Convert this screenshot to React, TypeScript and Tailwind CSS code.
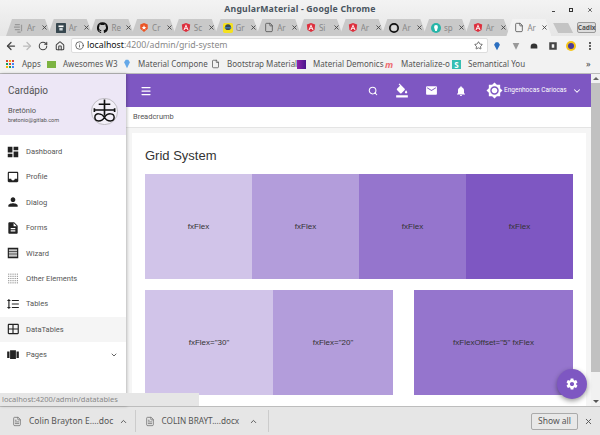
import React from "react";
import { ArrowLeft, ArrowRight, RotateCw, Home, Info, Star, MoreVertical, X, ChevronUp, ChevronDown, Search, Menu, FileText, File } from "lucide-react";

const P = ({ d, className = "w-[16px] h-[16px]", fill = "currentColor" }: { d: string; className?: string; fill?: string }) => (
  <svg viewBox="0 0 24 24" className={className} fill={fill}><path d={d} /></svg>
);

const Angular = () => (
  <svg viewBox="0 0 24 24" className="w-[10px] h-[11px] shrink-0">
    <path d="M12 1 L22 5 L20.500 18 L12 23 L3.500 18 L2 5Z" fill="#dd2f3d" />
    <path d="M12 4 L6 18 H8.500 L9.700 15 H14.300 L15.500 18 H18 Z M12 9 L13.500 13 H10.500Z" fill="#fff" fillRule="evenodd" />
  </svg>
);
const Doc = () => <File className="w-[10px] h-[11px] shrink-0 text-[#555]" strokeWidth={2} />;

const favicons: React.ReactNode[] = [
  <svg viewBox="0 0 12 12" className="w-[10px] h-[10px] shrink-0"><path d="M1 2h6M0 5h7M1 8h6M4 11h4M9 2v8" stroke="#999" strokeWidth="1.500" fill="none" /></svg>,
  <svg viewBox="0 0 12 12" className="w-[10px] h-[10px] shrink-0"><rect width="12" height="12" rx="1" fill="#37474f" /><rect x="3" y="3" width="6" height="2" fill="#fff" /><rect x="4" y="6" width="4" height="3" fill="#cfd8dc" /></svg>,
  <svg viewBox="0 0 24 24" className="w-[11px] h-[11px] shrink-0" fill="#111"><path d="M12 .5a12 12 0 0 0-3.800 23.400c.6.1.8-.3.8-.6v-2c-3.300.7-4-1.600-4-1.600-.6-1.400-1.400-1.800-1.400-1.800-1-.7.1-.7.1-.7 1.200.1 1.800 1.200 1.800 1.200 1 1.800 2.800 1.300 3.500 1 .1-.8.4-1.300.8-1.600-2.700-.3-5.500-1.300-5.500-6 0-1.200.5-2.300 1.300-3.100-.2-.4-.6-1.600 0-3.200 0 0 1-.3 3.400 1.200a11.500 11.500 0 0 1 6 0c2.300-1.500 3.300-1.200 3.300-1.200.7 1.600.2 2.800.1 3.200.8.8 1.300 1.900 1.300 3.100 0 4.600-2.800 5.700-5.500 6 .4.4.8 1.100.8 2.200v3.300c0 .3.2.7.8.6A12 12 0 0 0 12 .5z" /></svg>,
  <svg viewBox="0 0 24 24" className="w-[10px] h-[11px] shrink-0"><path d="M12 1 L21 5 L21 15 L12 23 L3 15 L3 5Z" fill="#eb5424" /><path d="M12 6l1.700 4.500H18l-3.500 2.700 1.300 4.300L12 15l-3.800 2.500 1.300-4.300L6 10.500h4.300z" fill="#fff" /></svg>,
  <Angular />,
  <svg viewBox="0 0 12 12" className="w-[10px] h-[10px] shrink-0"><rect width="12" height="12" rx="2" fill="#f5e11f" /><circle cx="6" cy="5" r="3.500" fill="#37474f" /><rect x="2" y="5" width="8" height="1.500" fill="#3f7fbf" /></svg>,
  <Doc />,
  <Angular />,
  <Angular />,
  <svg viewBox="0 0 12 12" className="w-[10px] h-[10px] shrink-0"><circle cx="6" cy="6" r="5" fill="none" stroke="#111" strokeWidth="2" /><rect x="3.500" y="3.500" width="5" height="5" fill="#ddd" /></svg>,
  <svg viewBox="0 0 12 12" className="w-[10px] h-[10px] shrink-0"><circle cx="6" cy="6" r="6" fill="#26b5a8" /><path d="M6 2.500a2.300 2.300 0 0 1 2.300 2.500L7 9.500H5L3.700 5A2.300 2.300 0 0 1 6 2.500z" fill="#fff" /></svg>,
  <Angular />,
  <Doc />,
];
const tabLabels = ["Ar", "Ar", "Re", "Cr", "Sc", "Gr", "Ar", "Si", "Ar", "Ar", "sp", "Ar", "Ar"];

const Tab = ({ i }: { i: number }) => {
  const active = i === 12;
  return (
    <div className={`relative -mr-[3.300px] w-[45px] h-[17px] flex items-center pl-[8px] gap-[3px] text-[8px] [clip-path:polygon(0_100%,6px_0,39px_0,45px_100%)] ${active ? "bg-[#f2f2f2] z-10" : "bg-[#c9c9c9]"}`}>
      {favicons[i]}
      <span className="text-[#888] w-[10px] overflow-hidden leading-[12px]">{tabLabels[i]}</span>
      <X className="w-[7px] h-[7px] text-[#444] ml-[1px] shrink-0" strokeWidth={3} />
    </div>
  );
};

const ICONS: Record<string, string> = {
  Dashboard: "M3 13h8V3H3v10zm0 8h8v-6H3v6zm10 0h8V11h-8v10zm0-18v6h8V3h-8z",
  Profile: "M19 3H4.990C3.890 3 3 3.900 3 5l.010 14c0 1.100.880 2 1.980 2H19c1.100 0 2-.9 2-2V5c0-1.100-.9-2-2-2zm0 12h-4c0 1.660-1.350 3-3 3s-3-1.340-3-3H4.990V5H19v10z",
  Dialog: "M12 12c2.210 0 4-1.790 4-4s-1.790-4-4-4-4 1.790-4 4 1.790 4 4 4zm0 2c-2.670 0-8 1.340-8 4v2h16v-2c0-2.660-5.330-4-8-4z",
  Forms: "M14 2H6c-1.100 0-1.990.9-1.990 2L4 20c0 1.100.890 2 1.990 2H18c1.100 0 2-.9 2-2V8l-6-6zm2 16H8v-2h8v2zm0-4H8v-2h8v2zm-3-5V3.500L18.500 9H13z",
  Wizard: "M3 3h18v18H3zM5 6v2h14V6zM5 10v1.500h14V10zM5 13v1.500h14V13zM5 16v2h14v-2z",
  Tables: "M6 7h2.500L5 3.500 1.500 7H4v10H1.500L5 20.500 8.500 17H6V7zm4-2v2h12V5H10zm0 14h12v-2H10v2zm0-6h12v-2H10v2z",
  DataTables: "M20 3H5c-1.100 0-2 .9-2 2v14c0 1.100.9 2 2 2h15c1.100 0 2-.9 2-2V5c0-1.100-.9-2-2-2zM11 19H5v-6h6v6zm0-8H5V5h6v6zm9 8h-7v-6h7v6zm0-8h-7V5h7v6z",
  Pages: "M7 19h10V4H7v15zm-5-2h4V6H2v11zm16-11v11h4V6h-4z",
};

const nav = ["Dashboard", "Profile", "Dialog", "Forms", "Wizard", "Other Elements", "Tables", "DataTables", "Pages"];

const DotGrid = () => (
  <svg viewBox="0 0 24 24" className="w-[13px] h-[13px] text-[#888]" fill="currentColor">
    {[3, 7, 11, 15, 19].map((y) => [4, 8, 12, 16, 20].map((x) => <rect key={`${x}-${y}`} x={x} y={y} width="2" height="2" />))}
  </svg>
);

const Bookmark = ({ icon, label, w }: { icon: React.ReactNode; label: string; w: string }) => (
  <div className={`flex items-center shrink-0 ${w}`}>
    <div className="w-[16px] shrink-0">{icon}</div>
    <span className="whitespace-nowrap text-[8px] leading-[12px] text-[#555]">{label}</span>
  </div>
);

const Block = ({ className, label }: { className: string; label: string }) => (
  <div className={`flex items-center justify-center text-[8px] text-[#333] ${className}`}>{label}</div>
);

export default function App() {
  return (
    <div className="relative w-[600px] h-[435px] overflow-hidden bg-white font-['Roboto',sans-serif]">
      {/* Chrome */}
      <div className="h-[74px] bg-gradient-to-b from-[#f3f3f3] to-[#d8d8d8] font-['Noto_Sans','DejaVu_Sans',sans-serif]">
        <div className="relative h-[19px] flex items-center justify-center text-[8.700px] font-bold text-[#4a5560] tracking-[0.200px]">
          AngularMaterial - Google Chrome
          <div className="absolute right-[7px] top-[7px] flex items-center gap-[14px]">
            <div className="w-[3px] h-[1.500px] mt-[3px] bg-[#444]" />
            <div className="w-[4px] h-[4px] border border-[#333]" />
            <X className="w-[6px] h-[6px] text-[#333]" strokeWidth={3} />
          </div>
        </div>
        <div className="h-[17px] flex items-end pl-[6px]">
          {Array.from({ length: 13 }, (_, i) => <Tab key={i} i={i} />)}
          <div className="ml-[5px] mb-[3px] w-[20px] h-[10px] bg-[#c4c4c4] [clip-path:polygon(0_0,75%_0,100%_100%,25%_100%)]" />
          <div className="ml-[4px] mb-[3px] w-[19px] h-[11px] border border-[#999] rounded-[2px] bg-[#ddd] text-[6.500px] font-bold text-[#555] flex items-center justify-center">Cadix</div>
        </div>
        <div className="h-[19px] bg-[#f2f2f2] flex items-center pl-[5px] pr-[3px]">
          <ArrowLeft className="w-[12px] h-[12px] text-[#444]" strokeWidth={2.500} />
          <ArrowRight className="w-[12px] h-[12px] text-[#bbb] ml-[4px]" strokeWidth={2.500} />
          <RotateCw className="w-[10px] h-[10px] text-[#444] ml-[5px]" strokeWidth={2.500} />
          <Home className="w-[10px] h-[10px] text-[#444] ml-[7px]" strokeWidth={2.500} />
          <div className="ml-[6px] w-[417px] h-[15px] bg-white border border-[#ddd] rounded-[2px] flex items-center pl-[3px] pr-[4px] text-[8.750px]">
            <Info className="w-[9px] h-[9px] text-[#444]" strokeWidth={2} />
            <span className="ml-[3px] text-[#111]">localhost</span>
            <span className="text-[#888]">:4200/admin/grid-system</span>
            <Star className="w-[9px] h-[9px] text-[#444] ml-auto" strokeWidth={2} />
          </div>
          <div className="flex items-center gap-[8.600px] ml-[4px]">
            <P d="M12 22 L5 9 L9 3 H15 L19 9Z" className="w-[10px] h-[10px] text-[#2b6fc0]" />
            <P d="M12 21 L4 5 H20Z" className="w-[10px] h-[10px] text-[#999]" />
            <P d="M4 14a8 8 0 0 1 16 0v4H4z" className="w-[10px] h-[10px] text-[#333]" />
            <P d="M3 3h18v18H3zM9 8v8h6V8z" className="w-[10px] h-[10px] text-[#444]" />
            <div className="w-[10px] h-[10px] rounded-full bg-[#f5c518] flex items-center justify-center"><div className="w-[6px] h-[6px] rounded-full bg-[#4a3a9a]" /></div>
            <MoreVertical className="w-[10px] h-[10px] text-[#333]" strokeWidth={3} />
          </div>
        </div>
        <div className="h-[19px] bg-[#f2f2f2] flex items-center pl-[6px] border-b border-[#bbb]">
          <div className="grid grid-cols-3 gap-[1px] w-[8px] h-[8px] mr-[8px] shrink-0">
            {["#db4437","#f4b400","#db4437","#0f9d58","#db4437","#4285f4","#f4b400","#0f9d58","#4285f4"].map((c, i) => <div key={i} style={{ background: c }} />)}
          </div>
          <span className="text-[8px] text-[#555] w-[25px] shrink-0">Apps</span>
          <Bookmark w="w-[75px]" label="Awesomes W3" icon={<div className="w-[9px] h-[7px] bg-[#7cb342]" />} />
          <Bookmark w="w-[89px]" label="Material Compone" icon={<P d="M12 22 L5 8 L9 2 H15 L19 8Z" className="w-[10px] h-[10px] text-[#64a8e8]" />} />
          <Bookmark w="w-[86px]" label="Bootstrap Material" icon={<File className="w-[9px] h-[10px] text-[#555]" />} />
          <Bookmark w="w-[88px]" label="Material Demonics" icon={<div className="w-[9px] h-[9px] bg-gradient-to-r from-[#8e24aa] to-[#4a148c]" />} />
          <Bookmark w="w-[67px]" label="Materialize-o" icon={<span className="block text-[9px] font-bold text-[#ee6e73] italic leading-none">m</span>} />
          <Bookmark w="w-[134px]" label="Semantical You" icon={<div className="w-[9px] h-[9px] bg-[#35bdb2] text-white text-[8px] font-bold leading-[9px] text-center">S</div>} />
          <span className="text-[9px] text-[#444]">»</span>
        </div>
      </div>

      {/* App */}
      <div className="flex h-[332px]">
        <aside className="w-[126px] shrink-0 bg-white shadow-[1px_0_3px_rgba(0,0,0,0.25)] z-10 relative">
          <div className="h-[61px] bg-[#ede7f6] relative pl-[8px] pt-[10px] text-[#555]">
            <div className="text-[10px] leading-[14px]">Cardápio</div>
            <div className="text-[7.500px] leading-[10px] mt-[8px]">Bretônio</div>
            <div className="text-[5.500px] leading-[7px] mt-[1px]">bretonio@gitlab.com</div>
            <svg viewBox="0 0 28 28" className="absolute left-[91px] top-[24px] w-[27px] h-[27px]">
              <circle cx="14" cy="14" r="13.600" fill="#f3eff8" stroke="#888" strokeWidth="0.500" />
              <path d="M14 1.500v17M8 6.500h12M3.500 12.500h21M3.500 10.500v4M24.500 10.500v4" stroke="#111" strokeWidth="1.700" fill="none" />
              <path d="M14 20C11 15.500 4 15 4 20C4 25 11 25 14 20C17 15 24 15.500 24 20C24 25 17 25 14 20" stroke="#111" strokeWidth="1.500" fill="none" />
            </svg>
          </div>
          <nav className="flex flex-col pt-[4px]">
            {nav.map((n) => (
              <div key={n} className={`h-[25.400px] flex items-center pl-[6px] pr-[8px] text-[7.500px] text-[#555] ${n === "DataTables" ? "bg-[#f5f5f5]" : ""}`}>
                <div className="w-[13px] flex justify-center mr-[7px]">
                  {n === "Other Elements" ? <DotGrid /> : <P d={ICONS[n]} className="w-[14px] h-[14px] shrink-0 text-[#222]" />}
                </div>
                <span>{n}</span>
                {n === "Pages" && <ChevronDown className="w-[8px] h-[8px] ml-auto text-[#444]" strokeWidth={2.500} />}
              </div>
            ))}
          </nav>
        </aside>

        <main className="flex-1 flex flex-col min-w-0">
          <div className="h-[33px] shrink-0 bg-[#7e57c2] flex items-center pl-[14px] text-white">
            <Menu className="w-[12px] h-[12px]" strokeWidth={2.500} />
            <div className="ml-auto flex items-center">
              <Search className="w-[10px] h-[10px] mr-[17px]" strokeWidth={2.500} />
              <svg viewBox="0 0 24 24" className="w-[14px] h-[15px] mr-[16px]" fill="currentColor"><path d="M16.560 8.940 7.620 0 6.210 1.410l2.380 2.380-5.150 5.150c-.59.590-.59 1.540 0 2.120l5.500 5.500c.29.290.68.440 1.060.440s.77-.15 1.060-.44l5.500-5.500c.59-.58.59-1.530 0-2.120zM19 11.500s-2 2.170-2 3.500c0 1.100.9 2 2 2s2-.9 2-2c0-1.330-2-3.500-2-3.500zM2 20h20v4H2z" /></svg>
              <P d="M20 4H4c-1.100 0-1.990.9-1.990 2L2 18c0 1.100.9 2 2 2h16c1.100 0 2-.9 2-2V6c0-1.100-.9-2-2-2zm0 4-8 5-8-5V6l8 5 8-5v2z" className="w-[13px] h-[13px] mr-[17px]" />
              <P d="M12 22c1.100 0 2-.9 2-2h-4c0 1.100.890 2 2 2zm6-6v-5c0-3.070-1.640-5.640-4.500-6.320V4c0-.83-.67-1.500-1.500-1.500s-1.500.67-1.500 1.500v.68C7.630 5.360 6 7.920 6 11v5l-2 2v1h16v-1l-2-2z" className="w-[12px] h-[12px] mr-[19px]" />
              <P d="M20 8.690V4h-4.690L12 .690 8.690 4H4v4.690L.690 12 4 15.310V20h4.690L12 23.310 15.310 20H20v-4.690L23.310 12 20 8.690zM12 18c-3.310 0-6-2.690-6-6s2.690-6 6-6 6 2.690 6 6-2.690 6-6 6zm0-10c-2.210 0-4 1.790-4 4s1.790 4 4 4 4-1.790 4-4-1.790-4-4-4z" className="w-[17px] h-[17px] mr-[1px]" />
              <span className="text-[6.500px] w-[64px] whitespace-nowrap">Engenhocas Cariocas</span>
              <ChevronDown className="w-[10px] h-[10px] ml-[4px] mr-[9px]" strokeWidth={2.500} />
            </div>
          </div>
          <div className="h-[21px] shrink-0 bg-white border-b border-[#e4e4e4] flex items-center pl-[7px] text-[7.500px] text-[#555]">Breadcrumb</div>
          <div className="flex-1 bg-[#f5f5f5] pl-[6px] pr-[5px] pt-[5px] overflow-hidden">
            <div className="bg-white h-[400px] px-[13px] pt-[14px]">
              <h1 className="text-[13px] leading-[18px] text-[#333] font-['Liberation_Sans',sans-serif] mb-[9px]">Grid System</h1>
              <div className="flex h-[105px] font-['Liberation_Sans',sans-serif]">
                <Block className="flex-1 bg-[#d1c4e9]" label="fxFlex" />
                <Block className="flex-1 bg-[#b39ddb]" label="fxFlex" />
                <Block className="flex-1 bg-[#9575cd]" label="fxFlex" />
                <Block className="flex-1 bg-[#7e57c2]" label="fxFlex" />
              </div>
              <div className="flex h-[105px] mt-[11px] font-['Liberation_Sans',sans-serif]">
                <Block className="w-[128px] bg-[#d1c4e9]" label={'fxFlex="30"'} />
                <Block className="w-[120px] bg-[#b39ddb]" label={'fxFlex="20"'} />
                <Block className="w-[159px] ml-[21px] bg-[#9575cd]" label={'fxFlexOffset="5" fxFlex'} />
              </div>
            </div>
          </div>
        </main>

        <div className="w-[9px] shrink-0 bg-[#f1f1f1] relative flex flex-col items-center">
          <div className="h-[9px] w-full flex items-center justify-center"><div className="w-0 h-0 border-l-[3px] border-r-[3px] border-b-[3px] border-transparent border-b-[#666]" /></div>
          <div className="w-full h-[289px] bg-[#c1c1c1]" />
          <div className="mt-auto h-[9px] w-full flex items-center justify-center"><div className="w-0 h-0 border-l-[3px] border-r-[3px] border-t-[3px] border-transparent border-t-[#555]" /></div>
        </div>
      </div>

      {/* FAB */}
      <div className="absolute left-[557px] top-[369px] w-[30px] h-[30px] rounded-full bg-[#7e57c2] shadow-[0_2px_5px_rgba(0,0,0,0.4)] flex items-center justify-center text-white z-20">
        <P d="M19.140 12.940c.04-.3.060-.61.060-.94 0-.32-.02-.64-.07-.94l2.030-1.580c.18-.14.230-.41.120-.61l-1.920-3.320c-.12-.22-.37-.29-.59-.22l-2.390.96c-.5-.38-1.030-.7-1.620-.94l-.36-2.540c-.04-.24-.24-.41-.48-.41h-3.840c-.24 0-.43.170-.47.410l-.36 2.540c-.59.240-1.130.570-1.620.940l-2.390-.96c-.22-.08-.47 0-.59.220L2.740 8.870c-.12.210-.08.470.120.610l2.030 1.580c-.05.3-.09.630-.09.940s.02.640.07.940l-2.030 1.580c-.18.140-.23.410-.12.610l1.920 3.320c.12.220.37.290.59.220l2.390-.96c.5.380 1.030.7 1.620.94l.36 2.540c.05.240.24.410.48.410h3.840c.24 0 .44-.17.47-.41l.36-2.540c.59-.24 1.130-.56 1.620-.94l2.390.96c.22.080.47 0 .59-.22l1.920-3.320c.12-.22.070-.47-.12-.61l-2.010-1.580zM12 15.600c-1.980 0-3.600-1.620-3.600-3.600s1.620-3.600 3.600-3.600 3.600 1.620 3.600 3.600-1.620 3.600-3.600 3.600z" className="w-[14px] h-[14px]" />
      </div>

      {/* Status bubble */}
      <div className="absolute left-0 top-[393px] w-[199px] h-[13px] bg-[#e6e6e6] flex items-center pl-[2px] text-[7.500px] text-[#888] z-20 font-['Noto_Sans',sans-serif]">localhost:4200/admin/datatables</div>

      {/* Downloads */}
      <div className="h-[29px] bg-[#e6e6e6] border-t border-[#bdbdbd] flex items-center font-['Noto_Sans',sans-serif] text-[8.500px] text-[#555]">
        <div className="flex items-center w-[135.500px] h-[22px] pl-[12px] border-r border-[#ccc]">
          <FileText className="w-[10px] h-[11px] text-[#777]" />
          <span className="ml-[7px]">Colin Brayton E....doc</span>
          <ChevronUp className="w-[9px] h-[9px] ml-[6px]" strokeWidth={2.500} />
        </div>
        <div className="flex items-center w-[133px] h-[22px] pl-[9px] border-r border-[#ccc]">
          <FileText className="w-[10px] h-[11px] text-[#777]" />
          <span className="ml-[7px] text-[8.200px]">COLIN BRAYT....docx</span>
          <ChevronUp className="w-[9px] h-[9px] ml-[10px]" strokeWidth={2.500} />
        </div>
        <div className="ml-auto mr-[5px] flex items-center gap-[6px]">
          <div className="w-[47px] h-[17px] border border-[#aaa] rounded-[2px] bg-[#e8e8e8] flex items-center justify-center">Show all</div>
          <X className="w-[9px] h-[9px] text-[#555] mr-[2px]" strokeWidth={2.500} />
        </div>
      </div>
    </div>
  );
}
